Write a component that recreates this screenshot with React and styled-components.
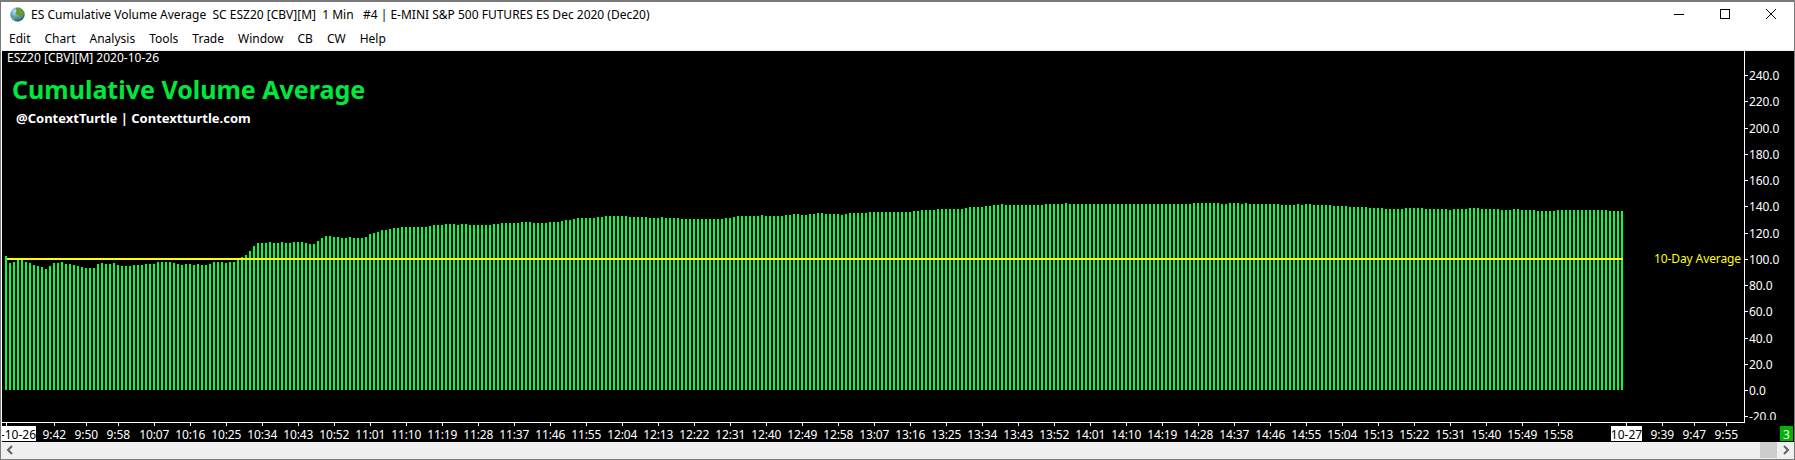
import React from "react";
import styled, { createGlobalStyle } from "styled-components";

const Global = createGlobalStyle`
  html, body { margin: 0; padding: 0; background: #fff; }
  #root { width: 1795px; height: 460px; }
`;

const UI_FONT = `"Noto Sans", "Open Sans", "Liberation Sans", sans-serif`;

const Window = styled.div`
  box-sizing: border-box;
  width: 1795px;
  height: 460px;
  display: flex;
  flex-direction: column;
  border: 1px solid #7a7a7a;
  border-top-width: 2px;
  background: #fff;
  font-family: ${UI_FONT};
  overflow: hidden;
`;

const TitleBar = styled.div`
  height: 24px;
  display: flex;
  align-items: center;
  padding-left: 9px;
  color: #000;
  font-size: 12px;
`;

const TitleText = styled.span`
  margin-left: 6px;
  white-space: pre;
  flex: 1;
`;

const WindowButtons = styled.div`
  display: flex;
  height: 100%;
`;

const WindowButton = styled.div`
  width: 46px;
  display: flex;
  align-items: center;
  justify-content: center;
`;

const MenuBar = styled.div`
  height: 24px;
  display: flex;
  align-items: center;
  padding-left: 1px;
  border-bottom: 1px solid #f0f0f0;
  box-sizing: content-box;
`;

const MenuItem = styled.span`
  padding: 0 7px;
  font-size: 12px;
  color: #000;
`;

const ChartPanel = styled.div`
  position: relative;
  height: 391px;
  background: #000;
  border-left: 1px solid #fff;
  box-sizing: border-box;
`;

const ChartSvg = styled.svg`
  display: block;
  font-family: ${UI_FONT};
  font-size: 12px;
`;

const Legend = styled.div`
  position: absolute;
  left: 5px;
  top: 0;
  display: flex;
  flex-direction: column;
  align-items: flex-start;
`;

const SymbolLabel = styled.div`
  font-size: 12px;
  line-height: 14px;
  color: #fff;
`;

const ChartHeading = styled.div`
  margin: 7px 0 0 5px;
  font-size: 25px;
  line-height: 34px;
  font-weight: 700;
  color: #00e83c;
  white-space: nowrap;
`;

const ChartCredit = styled.div`
  margin: 3px 0 0 9px;
  font-size: 13px;
  line-height: 18px;
  font-weight: 700;
  color: #fff;
  white-space: nowrap;
`;

const ScrollBar = styled.div`
  flex: 1;
  display: flex;
  align-items: stretch;
  background: #f0f0f0;
  padding-bottom: 1px;
`;

const ScrollArrow = styled.div`
  width: 17px;
  display: flex;
  align-items: center;
  justify-content: center;
`;

const ScrollTrack = styled.div`
  flex: 1;
  display: flex;
  justify-content: flex-end;
`;

const ScrollThumb = styled.div`
  width: 17px;
  background: #cdcdcd;
`;

const expand = (s) =>
  s.trim().split(/\s+/).flatMap((t) => {
    const [v, n] = t.split("*");
    return Array(Number(n || 1)).fill(Number(v));
  });

const TOPS = expand(`
256 263 262 260 260 262 263 265 266 267 269 266 263 263 262 264 264 265 266 267 268 268 268 264 263 264 264 263
265 266 266 266 265 265 265 264 264 264 262 262 262 262 263 264 265 264 264 265 264 265 265 264 262 262 262 263
262 262 259 257 255 251 246 243 243 243 242 243 243 242 243 243 242 242 242 243 244 244 241 238 236 236 237 237
238 238 237 238 238 238 237 234 233 232 230 230 229 228 228 227 227 227 227 227
227 227 226 225*3 224*3 225 224 224 225*6 224*2 223*5 222*3 223*4 222*3 221 220 220 219 218*5 217*2 216*6 217*5
218*3 217 218*4 219*11 218*2 217 216*6 215 216*5 215*2 214*2 215*2 214*2 213*2 214*4
215 214 213*5 212*11 211*2 210*4 209*7 208 207*4 206*2 205*2 204 205*10 204*5 203 204*31 203*7 204*2 203*3 204 203 204*3
204*5 205*4 204 205 204*2 205*5 206*4 207*5 208*4 209*5 208*5 209*6 210 209*4 208*3 209*5 210*3 209*2 210*4 211*5 210*13 211*4
`);

const Y_ZERO = 390;
const Y_UNIT = 1.312;
const Y_VALUES = [240, 220, 200, 180, 160, 140, 120, 100, 80, 60, 40, 20, 0, -20];

const EARLY_TIMES = [
  ["9:42", 54.3], ["9:50", 86.3], ["9:58", 118.3], ["10:07", 154.3], ["10:16", 190.3],
  ["10:25", 226.3], ["10:34", 262.3], ["10:43", 298.3], ["10:52", 334.3],
];
const fmt = (m) => `${Math.floor(m / 60)}:${String(m % 60).padStart(2, "0")}`;
const DAY_TIMES = Array.from({ length: 34 }, (_, i) => [fmt(661 + 9 * i), 370.3 + 36 * i]);
const NEXT_TIMES = [["9:39", 1662.3], ["9:47", 1694.3], ["9:55", 1726.3]];
const X_LABELS = [...EARLY_TIMES, ...DAY_TIMES, ...NEXT_TIMES];

const Chart = () => (
  <ChartSvg width="1792" height="391" shapeRendering="crispEdges">
    <defs>
      <clipPath id="yAxisClip"><rect x="1745" y="51" width="40" height="369" /></clipPath>
      <clipPath id="dateClip"><rect x="2" y="426" width="34" height="15" /></clipPath>
    </defs>
    <g transform="translate(-2 -51)">
      {TOPS.map((top, i) => (
        <rect key={i} x={5 + 4 * i} y={top} width="2" height={Y_ZERO - top} fill="#00ff40" />
      ))}
      <rect x="7" y="258" width="1616" height="2" fill="#ffff00" />
      <text x="1741" y="263" fill="#ffff00" textAnchor="end" letterSpacing="-0.1">10-Day Average</text>

      <rect x="1744" y="51" width="1" height="372" fill="#fff" />
      <rect x="2" y="422" width="1743" height="1" fill="#fff" />

      <g clipPath="url(#yAxisClip)">
        {Y_VALUES.map((v) => {
          const y = Math.round(Y_ZERO - v * Y_UNIT);
          return (
            <g key={v}>
              <rect x="1745" y={y} width="3" height="1" fill="#fff" />
              <text x="1749" y={y + 4.5} fill="#fff" letterSpacing="-0.1">{v.toFixed(1)}</text>
            </g>
          );
        })}
      </g>

      <rect x="6" y="423" width="1" height="3" fill="#fff" />
      {X_LABELS.map(([label, cx]) => (
        <g key={label + cx}>
          <rect x={Math.round(cx)} y="423" width="1" height="3" fill="#fff" />
          <text x={cx} y="438.5" fill="#fff" textAnchor="middle" letterSpacing="-0.1">{label}</text>
        </g>
      ))}

      <rect x="2" y="426" width="34" height="15" fill="#fff" />
      <text x="36" y="438.5" fill="#000" textAnchor="end" clipPath="url(#dateClip)">2020-10-26</text>

      <rect x="1626" y="423" width="1" height="3" fill="#fff" />
      <rect x="1611" y="426" width="31" height="15" fill="#fff" />
      <text x="1626.5" y="438.5" fill="#000" textAnchor="middle">10-27</text>

      <rect x="1780" y="426" width="13" height="15" fill="#00b400" />
      <text x="1786.5" y="438.5" fill="#fff" textAnchor="middle">3</text>
    </g>
  </ChartSvg>
);

const GlobeIcon = () => (
  <svg width="15" height="15" viewBox="0 0 15 15">
    <defs>
      <radialGradient id="globeSea" cx="0.35" cy="0.3" r="0.8">
        <stop offset="0" stopColor="#cfe6f5" />
        <stop offset="0.45" stopColor="#5d9cc9" />
        <stop offset="1" stopColor="#1d4d80" />
      </radialGradient>
    </defs>
    <circle cx="7.5" cy="7.5" r="7.2" fill="url(#globeSea)" />
    <path d="M6 1.2c2.2-.8 5 .1 6.6 2 1.3 1.7 1.3 4 .3 5.8-.7 1.3-2.3 2.6-3.6 3-.6-1.2-.2-2.4-1-3.4-.9-1-2.5-.9-2.9-2.2-.3-1.100.8-1.600.9-2.700.1-.9-.5-1.700-.3-2.500z" fill="#6b9d2c" />
    <path d="M2 9c1 .3 2 1 2.400 2.200.2.800 0 1.600-.3 2.100C3 12.500 2.200 10.800 2 9z" fill="#7fae35" />
  </svg>
);

const Chevron = ({ dir }) => (
  <svg width="8" height="10" viewBox="0 0 8 10">
    <path
      d={dir === "left" ? "M6 1 L2 5 L6 9" : "M2 1 L6 5 L2 9"}
      fill="none"
      stroke="#606060"
      strokeWidth="2"
    />
  </svg>
);

const MENU = ["Edit", "Chart", "Analysis", "Tools", "Trade", "Window", "CB", "CW", "Help"];

export default function App() {
  return (
    <>
      <Global />
      <Window>
        <TitleBar>
          <GlobeIcon />
          <TitleText>{"ES Cumulative Volume Average  SC ESZ20 [CBV][M]  1 Min   #4 | E-MINI S&P 500 FUTURES ES Dec 2020 (Dec20)"}</TitleText>
          <WindowButtons>
            <WindowButton>
              <svg width="10" height="10" viewBox="0 0 10 10" shapeRendering="crispEdges"><rect x="0" y="5" width="10" height="1" fill="#000" /></svg>
            </WindowButton>
            <WindowButton>
              <svg width="10" height="10" viewBox="0 0 10 10" shapeRendering="crispEdges"><rect x="0.5" y="0.5" width="9" height="9" fill="none" stroke="#000" /></svg>
            </WindowButton>
            <WindowButton>
              <svg width="10" height="10" viewBox="0 0 10 10"><path d="M0 0 L10 10 M10 0 L0 10" stroke="#000" strokeWidth="1" /></svg>
            </WindowButton>
          </WindowButtons>
        </TitleBar>
        <MenuBar>
          {MENU.map((m) => <MenuItem key={m}>{m}</MenuItem>)}
        </MenuBar>
        <ChartPanel>
          <Chart />
          <Legend>
            <SymbolLabel>ESZ20 [CBV][M] 2020-10-26</SymbolLabel>
            <ChartHeading>Cumulative Volume Average</ChartHeading>
            <ChartCredit>@ContextTurtle | Contextturtle.com</ChartCredit>
          </Legend>
        </ChartPanel>
        <ScrollBar>
          <ScrollArrow><Chevron dir="left" /></ScrollArrow>
          <ScrollTrack><ScrollThumb /></ScrollTrack>
          <ScrollArrow><Chevron dir="right" /></ScrollArrow>
        </ScrollBar>
      </Window>
    </>
  );
}
